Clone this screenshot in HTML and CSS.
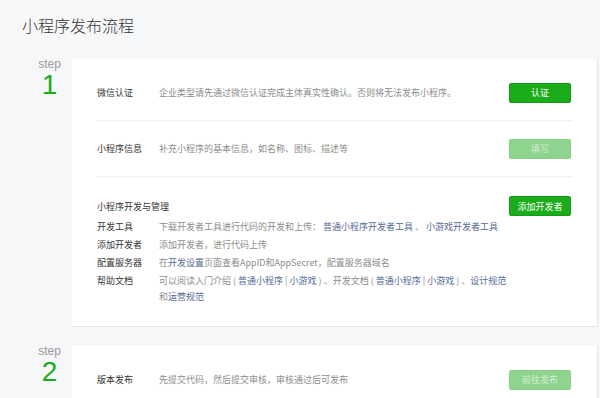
FILE: index.html
```html
<!DOCTYPE html>
<html lang="zh-CN">
<head>
    <meta charset="UTF-8">
    <meta name="viewport" content="width=device-width, initial-scale=1.0">
    <title>小程序发布流程</title>
    <link rel="stylesheet" href="styles.css">
</head>
<body>
    <h2 class="page-title">小程序发布流程</h2>

    <!-- step 1 -->
    <div class="step-block">
        <div class="step-no">
            <span class="step-text">step</span>
            <span class="step-num">1</span>
        </div>
        <div class="step-card">
            <div class="item">
                <span class="item-label">微信认证</span>
                <span class="item-desc">企业类型请先通过微信认证完成主体真实性确认。否则将无法发布小程序。</span>
                <a href="#" class="btn">认证</a>
            </div>
            <div class="item">
                <span class="item-label">小程序信息</span>
                <span class="item-desc">补充小程序的基本信息，如名称、图标、描述等</span>
                <a href="#" class="btn btn-disabled">填写</a>
            </div>
            <div class="manage">
                <div class="manage-head">
                    <span class="manage-title">小程序开发与管理</span>
                    <a href="#" class="btn">添加开发者</a>
                </div>
                <ul class="manage-list">
                    <li>
                        <span class="item-label">开发工具</span>
                        <span class="item-desc">下载开发者工具进行代码的开发和上传： <a href="#">普通小程序开发者工具</a> 、 <a href="#">小游戏开发者工具</a></span>
                    </li>
                    <li>
                        <span class="item-label">添加开发者</span>
                        <span class="item-desc">添加开发者，进行代码上传</span>
                    </li>
                    <li>
                        <span class="item-label">配置服务器</span>
                        <span class="item-desc">在<a href="#">开发设置</a>页面查看AppID和AppSecret，配置服务器域名</span>
                    </li>
                    <li>
                        <span class="item-label">帮助文档</span>
                        <span class="item-desc">可以阅读入门介绍 ( <a href="#">普通小程序</a> | <a href="#">小游戏</a> ) 、开发文档 ( <a href="#">普通小程序</a> | <a href="#">小游戏</a> ) 、<a href="#">设计规范</a><br>和<a href="#">运营规范</a></span>
                    </li>
                </ul>
            </div>
        </div>
    </div>

    <!-- step 2 -->
    <div class="step-block">
        <div class="step-no">
            <span class="step-text">step</span>
            <span class="step-num">2</span>
        </div>
        <div class="step-card">
            <div class="item">
                <span class="item-label">版本发布</span>
                <span class="item-desc">先提交代码，然后提交审核，审核通过后可发布</span>
                <a href="#" class="btn btn-disabled">前往发布</a>
            </div>
        </div>
    </div>
</body>
</html>
```

FILE: styles.css
```css
body {
    font-family: "Noto Sans CJK SC", "Liberation Sans", sans-serif;
    margin: 0;
    padding: 15px 2px 0 22px;
    background-color: #f6f7f9;
    color: #353535;
}

a {
    text-decoration: none;
}

.page-title {
    margin: 0 0 24px;
    font-size: 16px;
    line-height: 20px;
    font-weight: 300;
    color: #353535;
}

.step-block {
    display: flex;
    align-items: flex-start;
    margin-bottom: 19px;
}

.step-no {
    width: 50px;
    padding-left: 5px;
    box-sizing: border-box;
    flex-shrink: 0;
    display: flex;
    flex-direction: column;
    align-items: center;
}

.step-text {
    font-family: "Liberation Sans", sans-serif;
    font-size: 12px;
    line-height: 11px;
    color: #9a9a9a;
}

.step-num {
    font-family: "Liberation Sans", sans-serif;
    font-size: 28px;
    line-height: 26px;
    color: #1aad19;
    margin-top: 2px;
}

.step-card {
    flex: 1;
    background-color: #fff;
    padding: 6px 26px 21px 25px;
    border-right: 1px solid #e7e8eb;
    border-bottom: 1px solid #e7e8eb;
    font-size: 9px;
}

.item {
    display: flex;
    align-items: center;
    height: 55px;
    border-bottom: 1px dotted #e2e2e2;
}

.step-block:last-child .item {
    border-bottom: none;
}

.item-label {
    width: 62px;
    flex-shrink: 0;
    color: #353535;
}

.item-desc {
    flex: 1;
    color: #8d8d8d;
}

.item-desc a {
    color: #576b95;
}

.btn {
    width: 62px;
    height: 20px;
    box-sizing: border-box;
    display: flex;
    align-items: center;
    justify-content: center;
    background-color: #1aad19;
    border: 1px solid #179b16;
    border-radius: 2px;
    color: #fff;
    font-size: 9px;
    flex-shrink: 0;
}

.btn-disabled {
    background-color: #8fd48e;
    border-color: #86cf85;
    color: rgba(255, 255, 255, 0.6);
}

.manage {
    padding-top: 19px;
}

.manage-head {
    display: flex;
    align-items: center;
    justify-content: space-between;
    height: 20px;
}

.manage-title {
    color: #353535;
}

.manage-list {
    list-style: none;
    margin: 3px 0 0;
    padding: 0;
}

.manage-list li {
    display: flex;
    line-height: 16px;
    margin-bottom: 2px;
}

.manage-list li:last-child {
    margin-bottom: 0;
}
```
